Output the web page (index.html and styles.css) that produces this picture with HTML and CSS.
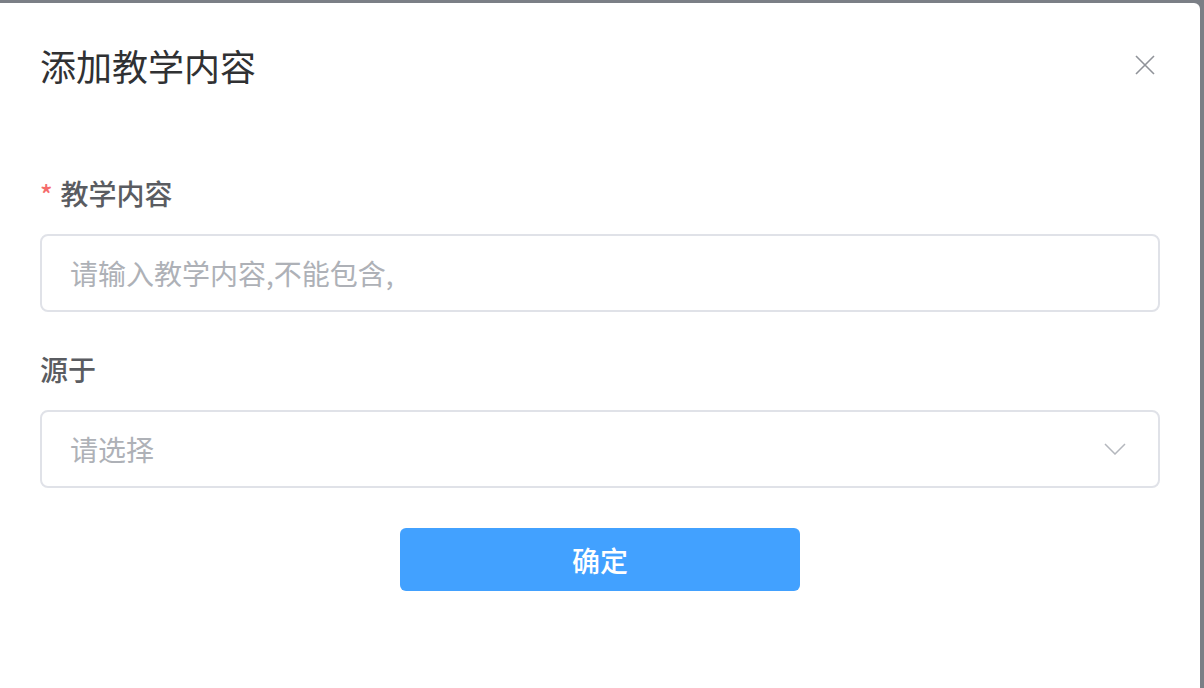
FILE: index.html
```html
<!DOCTYPE html>
<html lang="zh-CN">
<head>
<meta charset="utf-8">
<title>添加教学内容</title>
<link rel="stylesheet" href="styles.css">
</head>
<body>
<div class="dialog">
  <div class="dialog-header">
    <span class="dialog-title">添加教学内容</span>
    <button class="close-btn" aria-label="关闭">
      <svg width="20" height="20" viewBox="0 0 20 20"><path d="M1 1L19 19M19 1L1 19" stroke="#909399" stroke-width="1.6" fill="none"/></svg>
    </button>
  </div>
  <form class="dialog-body">
    <div class="form-item">
      <label class="form-label"><span class="required">*</span>教学内容</label>
      <div class="input"><span class="placeholder">请输入教学内容,不能包含,</span></div>
    </div>
    <div class="form-item">
      <label class="form-label">源于</label>
      <div class="input select"><span class="placeholder">请选择</span>
        <svg class="chevron" width="22" height="12" viewBox="0 0 22 12"><path d="M1 1L11 11L21 1" stroke="#b4b7bd" stroke-width="1.5" fill="none"/></svg>
      </div>
    </div>
    <div class="actions">
      <button type="button" class="primary-btn">确定</button>
    </div>
  </form>
</div>
</body>
</html>
```
FILE: styles.css
```css
html, body {
  margin: 0;
  padding: 0;
  height: 100%;
  overflow: hidden;
}
body {
  background: #7b7f86;
  font-family: "Noto Sans CJK SC", "Noto Sans", sans-serif;
}
.dialog {
  margin-top: 3px;
  width: 1200px;
  height: 685px;
  background: #ffffff;
  border-radius: 0 6px 0 0;
  box-sizing: border-box;
}
.dialog-header {
  display: flex;
  align-items: center;
  justify-content: space-between;
  padding: 35px 45px 0 40px;
  height: 54px;
}
.dialog-title {
  font-size: 36px;
  line-height: 54px;
  color: #303133;
}
.close-btn {
  border: 0;
  background: none;
  padding: 0;
  width: 20px;
  height: 20px;
  display: flex;
}
.dialog-body {
  padding: 81px 40px 0 40px;
  margin: 0;
}
.form-item {
  margin-bottom: 37px;
}
.form-item + .form-item {
  margin-bottom: 40px;
}
.form-label {
  display: block;
  font-size: 28px;
  line-height: 40px;
  height: 40px;
  color: #5a5c61;
  font-weight: 500;
  margin-bottom: 21px;
}
.required {
  color: #f56c6c;
  margin-right: 8px;
  font-size: 26px;
}
.input {
  box-sizing: border-box;
  height: 78px;
  border: 2px solid #e0e2e8;
  border-radius: 8px;
  display: flex;
  align-items: center;
  padding: 0 28px;
}
.placeholder {
  font-size: 28px;
  color: #aeb1b7;
  flex: 1;
}
.select {
  justify-content: space-between;
  padding-right: 32px;
}
.actions {
  display: flex;
  justify-content: center;
}
.primary-btn {
  width: 400px;
  height: 63px;
  border: 0;
  border-radius: 6px;
  background: #42a1ff;
  color: #ffffff;
  font-family: inherit;
  font-size: 28px;
  font-weight: 500;
}
```
